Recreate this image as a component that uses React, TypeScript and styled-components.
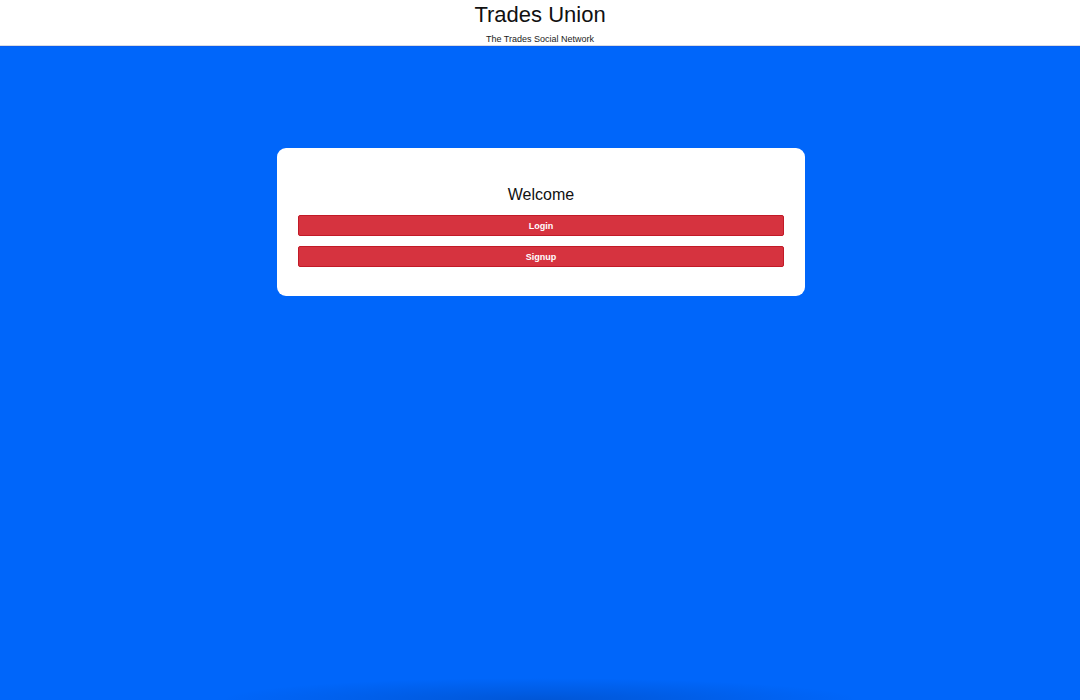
import React from "react";
import styled, { createGlobalStyle } from "styled-components";

const Global = createGlobalStyle`
  html, body { margin: 0; padding: 0; height: 100%; }
  body { font-family: "Liberation Sans", Arial, sans-serif; background: #0066fa; }
  #root { min-height: 100vh; display: flex; flex-direction: column; }
`;

const Header = styled.header`
  background: #fff;
  height: 46px;
  border-bottom: 1px solid #d9dde3;
  display: flex;
  flex-direction: column;
  align-items: center;
  box-sizing: border-box;
  padding-top: 2px;
`;

const Title = styled.h1`
  margin: 0;
  font-family: "Liberation Sans", Arial, sans-serif;
  font-size: 22px;
  font-weight: 400;
  line-height: 26px;
  color: #111;
`;

const Subtitle = styled.p`
  margin: 6px 0 0;
  font-family: "Liberation Sans", Arial, sans-serif;
  font-size: 9px;
  line-height: 10px;
  color: #222;
`;

const Main = styled.main`
  flex: 1;
  background:
    radial-gradient(ellipse 320px 22px at 540px 100%, rgba(0, 30, 90, 0.22), rgba(0, 30, 90, 0) 100%),
    #0066fa;
  border-top: 1px solid #0a5ef0;
  display: flex;
  justify-content: center;
  align-items: flex-start;
  padding: 101px 0 0 2px;
`;

const Card = styled.section`
  width: 528px;
  box-sizing: border-box;
  background: #fff;
  border-radius: 9px;
  padding: 37px 21px 29px;
  display: flex;
  flex-direction: column;
  gap: 10px;
`;

const Heading = styled.h2`
  margin: 0;
  text-align: center;
  font-family: "Liberation Sans", Arial, sans-serif;
  font-size: 16px;
  font-weight: 400;
  line-height: 20px;
  color: #111;
`;

const Button = styled.button`
  height: 21px;
  width: 100%;
  background: #d6333f;
  border: 1px solid #c21a27;
  border-radius: 2px;
  color: #fff;
  font-family: "Liberation Sans", Arial, sans-serif;
  font-size: 9px;
  font-weight: 700;
  cursor: pointer;
  padding: 0;
`;

export default function App() {
  return (
    <>
      <Global />
      <Header>
        <Title>Trades Union</Title>
        <Subtitle>The Trades Social Network</Subtitle>
      </Header>
      <Main>
        <Card>
          <Heading>Welcome</Heading>
          <Button>Login</Button>
          <Button>Signup</Button>
        </Card>
      </Main>
    </>
  );
}
